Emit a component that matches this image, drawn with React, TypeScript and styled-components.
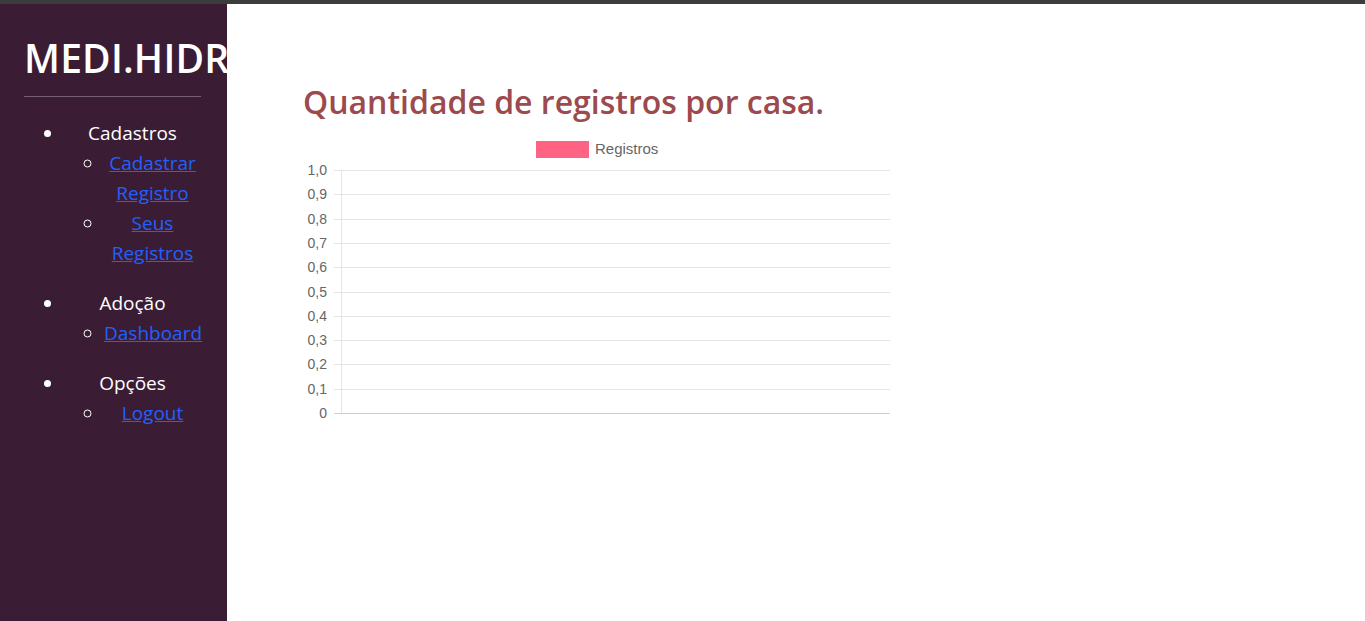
import React from "react";
import styled, { createGlobalStyle } from "styled-components";

const Global = createGlobalStyle`
  html, body { margin: 0; padding: 0; background: #fff; }
  body { font-family: "Open Sans", "Noto Sans", sans-serif; }
`;

const Page = styled.div`
  display: flex;
  flex-direction: column;
  height: 621px;
  overflow: hidden;
`;

const TopStrip = styled.div`
  height: 4px;
  background: #3c3c3c;
  flex: none;
`;

const Body = styled.div`
  display: flex;
  flex: 1;
  min-height: 0;
`;

const Sidebar = styled.aside`
  width: 227px;
  box-sizing: border-box;
  padding: 0 26px 0 24px;
  background: #3a1d34;
  overflow: hidden;
  flex: none;
  color: #fff;
`;

const Brand = styled.h1`
  margin: 30px 0 0;
  font-size: 39px;
  line-height: 48px;
  font-weight: 600;
  white-space: nowrap;
  letter-spacing: 0.2px;
`;

const Divider = styled.hr`
  margin: 14px 0 0;
  border: none;
  height: 1px;
  width: 177px;
  background: rgba(255, 255, 255, 0.3);
`;

const Menu = styled.ul`
  list-style: disc;
  margin: 21px 0 0;
  padding-left: 40px;
  font-size: 19px;
  line-height: 30px;
`;

const Section = styled.li`
  text-align: center;
  margin-bottom: 20px;
`;

const SubMenu = styled.ul`
  list-style: circle;
  margin: 0;
  padding-left: 40px;
`;

const SubItem = styled.li`
  text-align: center;
`;

const Link = styled.a`
  color: #2160ff;
  text-decoration: underline;
`;

const Main = styled.main`
  flex: 1;
  padding: 0 0 0 76px;
`;

const Title = styled.h2`
  margin: 78px 0 0;
  font-size: 32px;
  line-height: 40px;
  font-weight: 600;
  color: #9c4a4e;
`;

const ChartWrap = styled.div`
  width: 600px;
  height: 290px;
  margin-top: 14px;
`;

const ticks = ["1,0", "0,9", "0,8", "0,7", "0,6", "0,5", "0,4", "0,3", "0,2", "0,1", "0"];

function Chart() {
  const top = 34;
  const bottom = 277;
  const left = 38;
  const right = 587;
  const step = (bottom - top) / 10;
  return (
    <svg width="600" height="290" viewBox="0 0 600 290">
      <rect x="233" y="5" width="53" height="17" fill="#ff6384" />
      <text x="292" y="18" fontFamily="Liberation Sans, Arial, sans-serif" fontSize="15" fill="#666">
        Registros
      </text>
      {ticks.map((t, i) => {
        const y = Math.round(top + i * step);
        const isLast = i === ticks.length - 1;
        return (
          <g key={t}>
            <line x1={left - 7} x2={right} y1={y + 0.5} y2={y + 0.5} stroke={isLast ? "#cfcfcf" : "#e5e5e5"} strokeWidth="1" />
            <text
              x={left - 14}
              y={y + 5}
              textAnchor="end"
              fontFamily="Liberation Sans, Arial, sans-serif"
              fontSize="14"
              fill="#666"
            >
              {t}
            </text>
          </g>
        );
      })}
      <line x1={left + 0.5} x2={left + 0.5} y1={top} y2={bottom} stroke="#e5e5e5" strokeWidth="1" />
    </svg>
  );
}

export default function App() {
  return (
    <Page>
      <Global />
      <TopStrip />
      <Body>
        <Sidebar>
          <Brand>MEDI.HIDRICO</Brand>
          <Divider />
          <Menu>
            <Section>
              Cadastros
              <SubMenu>
                <SubItem>
                  <Link href="#">Cadastrar Registro</Link>
                </SubItem>
                <SubItem>
                  <Link href="#">Seus Registros</Link>
                </SubItem>
              </SubMenu>
            </Section>
            <Section>
              Adoção
              <SubMenu>
                <SubItem>
                  <Link href="#">Dashboard</Link>
                </SubItem>
              </SubMenu>
            </Section>
            <Section>
              Opções
              <SubMenu>
                <SubItem>
                  <Link href="#">Logout</Link>
                </SubItem>
              </SubMenu>
            </Section>
          </Menu>
        </Sidebar>
        <Main>
          <Title>Quantidade de registros por casa.</Title>
          <ChartWrap>
            <Chart />
          </ChartWrap>
        </Main>
      </Body>
    </Page>
  );
}
